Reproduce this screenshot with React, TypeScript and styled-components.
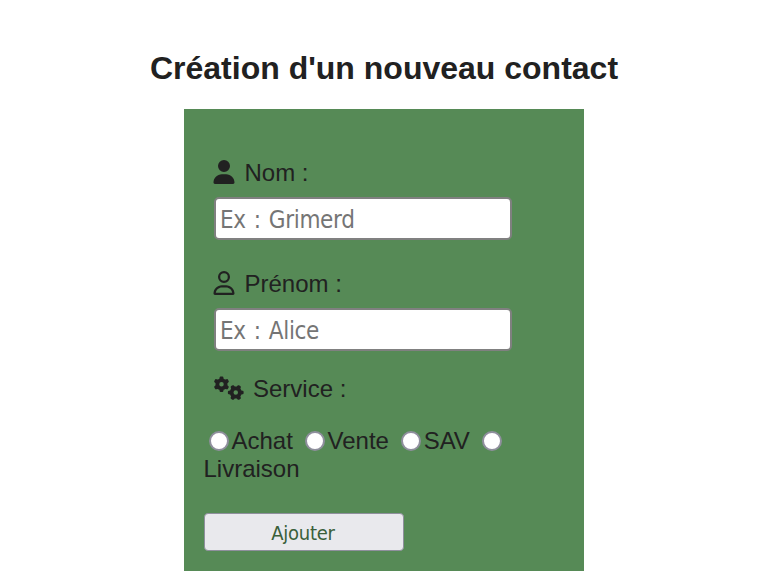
import React from "react";
import styled, { createGlobalStyle } from "styled-components";
import { FaUser, FaRegUser, FaGears } from "react-icons/fa6";

const Global = createGlobalStyle`
  body { margin: 0; background: #fff; color: #212121; font-family: "Liberation Sans", Arial, sans-serif; font-size: 24px; }
`;
const Page = styled.main`
  display: flex; flex-direction: column; align-items: center;
`;
const Title = styled.h1`
  margin: 50px 0 22px; font-size: 32px; line-height: 37px; font-weight: 700; white-space: nowrap;
`;
const Form = styled.form`
  box-sizing: border-box; width: 400px; height: 462px; padding: 48px 20px 20px; background: #568a56;
`;
const Field = styled.div`
  height: 111px; padding-left: 10px; box-sizing: border-box;
`;
const Label = styled.label`
  display: flex; align-items: center; height: 30px; line-height: 28px;
  svg { display: block; flex: none; margin: 0 8.5px 0 -2px; }
  span { padding-top: 2px; }
`;
const Input = styled.input`
  display: block; box-sizing: border-box; width: 298px; height: 43px; margin: 10px 0 0; padding: 3px 4px 1px;
  border: 2px solid #808080; border-radius: 5px; background: #fff;
  font-family: "DejaVu Sans Condensed", "DejaVu Sans", sans-serif; font-stretch: semi-condensed;
  font-size: 24px; letter-spacing: -0.35px; word-spacing: 1.6px;
  &::placeholder { color: #757575; opacity: 1; }
`;
const ServiceLabel = styled.div`
  display: flex; align-items: center; height: 28px; margin: -4px 0 24px; padding-left: 9.5px; line-height: 28px;
  svg { margin: -2px 9.5px 0 0; }
`;
const Choices = styled.div`
  line-height: 28px; margin-left: -0.5px;
`;
const Radio = styled.input`
  appearance: none; box-sizing: border-box; width: 20px; height: 20px; margin: 0 3px 0 5px; vertical-align: -2px;
  border: 2px solid #8f8f9d; border-radius: 50%; background: #fff;
`;
const Submit = styled.button`
  display: block; width: 200px; height: 38px; margin-top: 30px; padding: 2px 2px 0 0; border: 1px solid #8f8f9d; border-radius: 4px;
  background: #e9e9ed; color: #3a5f3a; font-family: "DejaVu Sans Condensed", "DejaVu Sans", sans-serif; font-stretch: semi-condensed;
  font-size: 20px; letter-spacing: -0.25px;
`;

export default function App() {
  return (
    <>
      <Global />
      <Page>
        <Title>Création d'un nouveau contact</Title>
        <Form>
          <Field>
            <Label htmlFor="nom"><FaUser size={24} /><span>Nom :</span></Label>
            <Input id="nom" placeholder="Ex : Grimerd" />
          </Field>
          <Field>
            <Label htmlFor="prenom"><FaRegUser size={24} /><span>Prénom :</span></Label>
            <Input id="prenom" placeholder="Ex : Alice" />
          </Field>
          <ServiceLabel><FaGears size={30} />Service :</ServiceLabel>
          <Choices>
            {["Achat", "Vente", "SAV", "Livraison"].map((name) => (
              <React.Fragment key={name}>
                <Radio type="radio" name="service" id={name} /><label htmlFor={name}>{name}</label>{" "}
              </React.Fragment>
            ))}
          </Choices>
          <Submit type="button">Ajouter</Submit>
        </Form>
      </Page>
    </>
  );
}
